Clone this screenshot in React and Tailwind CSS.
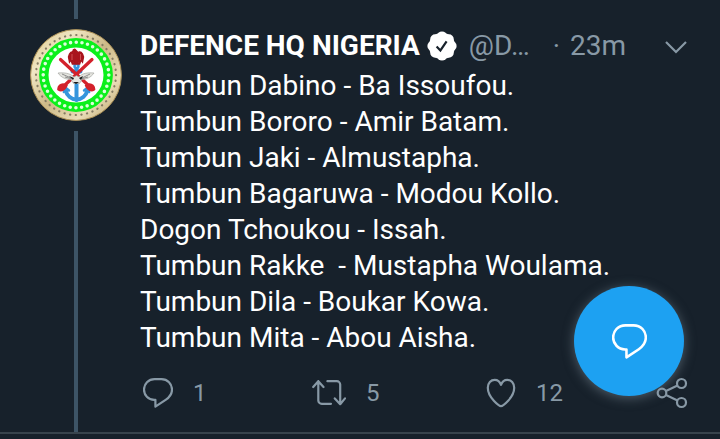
import { useState } from 'react'

const TWEET = {
  name: 'DEFENCE HQ NIGERIA',
  handle: '@D…',
  age: '23m',
  lines: [
    'Tumbun Dabino - Ba Issoufou.',
    'Tumbun Bororo - Amir Batam.',
    'Tumbun Jaki - Almustapha.',
    'Tumbun Bagaruwa - Modou Kollo.',
    'Dogon Tchoukou - Issah.',
    'Tumbun Rakke  - Mustapha Woulama.',
    'Tumbun Dila - Boukar Kowa.',
    'Tumbun Mita - Abou Aisha.',
  ],
  replies: 1,
  retweets: 5,
  likes: 12,
}

// Shared by the reply action and the floating compose button
function BubbleIcon({ className, strokeWidth = 2.2 }) {
  return (
    <svg viewBox="0 0 30 30" className={className} fill="none" stroke="currentColor" strokeWidth={strokeWidth} strokeLinejoin="round" aria-hidden="true">
      <path d="M11.5 1.2h7C24.6 1.2 29 5.8 29 11.6c0 4-2.2 7.4-6 10L12.4 28.6v-6.8h-1.2C5.2 21.6 1 17 1 11.6 1 5.8 5.4 1.2 11.5 1.2z" />
    </svg>
  )
}

function RetweetIcon() {
  return (
    <svg viewBox="0 0 34 30" className="h-[30px] w-[34px]" fill="none" stroke="currentColor" strokeWidth="2.2" strokeLinecap="round" strokeLinejoin="round" aria-hidden="true">
      <path d="M1.2 9 6.3 3.2l5.2 5.8M6.3 3.2v19.2a3.4 3.4 0 0 0 3.4 3.4H19M15.400 3.200h9.400a3.400 3.400 0 0 1 3.400 3.400V26M22.800 20.400l5.400 5.800 4.800-5.800" />
    </svg>
  )
}

function HeartIcon() {
  return (
    <svg viewBox="0 0 30 30" className="size-[30px]" fill="none" stroke="currentColor" strokeWidth="2.2" strokeLinejoin="round" aria-hidden="true">
      <path d="M15 28.2c-1.500 0-13.200-8.400-13.200-18.400 0-5 3.100-8 6.900-8 3 0 5.200 1.900 6.300 5 1.100-3.100 3.300-5 6.300-5 3.800 0 6.900 3 6.900 8 0 10-11.700 18.400-13.200 18.400z" />
    </svg>
  )
}

function ShareIcon() {
  return (
    <svg viewBox="0 0 32 32" className="size-8" fill="none" stroke="currentColor" strokeWidth="2.2" aria-hidden="true">
      <circle cx="6" cy="16" r="4.3" />
      <circle cx="25.5" cy="6.5" r="4.5" />
      <circle cx="25.5" cy="25.5" r="4.5" />
      <path d="m10 14 11.500-5.500M10 18l11.500 5.500" />
    </svg>
  )
}

const LOBES = [0, 45, 90, 135, 180, 225, 270, 315]

function VerifiedBadge() {
  return (
    <svg viewBox="0 0 30 30" className="size-[30px] shrink-0" role="img" aria-label="Verified account">
      <g fill="#fff">
        <circle cx="15" cy="15" r="13.2" />
        {LOBES.map((deg) => (
          <circle key={deg} cx="15" cy="5.4" r="5" transform={`rotate(${deg} 15 15)`} />
        ))}
      </g>
      <path d="m9.6 15.400 3.800 4 6.200-9" fill="none" stroke="#17212b" strokeWidth="2.2" />
    </svg>
  )
}

// Round crest: gold rim, beaded green band, eagle over crossed swords and anchor
function Crest() {
  return (
    <svg viewBox="0 0 92 92" className="size-[92px] shrink-0" role="img" aria-label="Defence HQ Nigeria">
      <defs>
        <linearGradient id="rim" x1="0" y1="0" x2="1" y2="1">
          <stop offset="0" stopColor="#d8c07c" />
          <stop offset=".25" stopColor="#f0e6c4" />
          <stop offset=".5" stopColor="#cdb987" />
          <stop offset=".75" stopColor="#e9ddb8" />
          <stop offset="1" stopColor="#b39757" />
        </linearGradient>
      </defs>
      <circle cx="46" cy="46" r="45.4" fill="url(#rim)" stroke="#a98e54" />
      <circle cx="46" cy="46" r="40" fill="none" stroke="#857b62" strokeWidth="2.2" strokeLinecap="round" strokeDasharray="0.2 5.51" />
      <circle cx="46" cy="46" r="32.2" fill="#fff" stroke="#0bf01b" strokeWidth="9.4" />
      <circle cx="46" cy="46" r="32.8" fill="none" stroke="#ddffdc" strokeWidth="3.6" strokeLinecap="round" strokeDasharray="0 5.725" />
      <g fill="none" stroke="#3595dc" strokeLinecap="round">
        <circle cx="46.5" cy="37" r="2" strokeWidth="2.4" />
        <path d="M46.5 40v31M42.5 42.5h8" strokeWidth="4" />
        <path d="M35.5 61c1.500 6 6 9.500 11 9.500s9.500-3.500 11-9.500" strokeWidth="4" />
        <path d="m33.8 63 1.600-4.500 3.600 3M59.200 63l-1.600-4.500-3.600 3" strokeWidth="2.4" />
      </g>
      <g fill="none" stroke="#d3212b" strokeLinecap="round">
        <path d="M30.5 30.500 58 56M62 30.500 35 56" strokeWidth="3.2" />
        <path d="M33 56c-2 0-4 1.500-4 4 2 1.500 5 .5 6.500-3zM59.500 56c2 0 4 1.500 4 4-2 1.500-5 .5-6.500-3z" fill="#df2527" strokeWidth="3.6" />
      </g>
      <path d="M46 21.500c-1-2-3-1.200-3 .5l1 1.500c-2-1.500-4.500-.5-5.500 4.500l1 5 1.500-2 1 3 1.500-3 .5 3-2 1h8l-2-1 .5-3 1.500 3 1-3 1.500 2 1-5c-1-5-3.500-6-5.500-4.500z" fill="#a9151d" stroke="#a9151d" strokeWidth="1.4" />
      <path d="M42 25v6M50.500 25v6" stroke="#df6a6a" strokeWidth=".7" />
      <path d="M28 44c6-.5 12 0 16 4l2.500-1.500L49 48c3-4 9-4.500 15-4-3 4.500-8 6.500-12 6.500l-2.500 4h-6l-2.500-4c-5 0-10-2-13-6.500z" fill="#e4e4df" stroke="#9a9c97" strokeWidth=".6" />
      <path d="m32 45 9 4M35 48l7 2M60 45l-8 4M58 48l-7 2" fill="none" stroke="#777" strokeWidth=".8" />
      <path d="m39 47 5 2-1 2zM49 49l4-2-2 4zM43 53h6l-3 2z" fill="#17191b" />
    </svg>
  )
}

function Action({ label, count, children, ...rest }) {
  return (
    <button type="button" aria-label={label} className="flex flex-1 items-center gap-5 text-left" {...rest}>
      {children}
      <span>{count}</span>
    </button>
  )
}

export default function App() {
  const [liked, setLiked] = useState(false)

  return (
    <main className="min-h-screen bg-[#17212b] font-[Roboto,sans-serif] text-[28px] leading-9 text-white">
      <article className="flex gap-[18px] border-b-2 border-[#38444d] pr-8 pl-[30px]">
        {/* Thread line runs above and below the avatar */}
        <div className="flex shrink-0 flex-col items-center gap-[10px]">
          <div className="h-[19px] w-1 bg-[#3d5466]" />
          <Crest />
          <div className="w-1 flex-1 bg-[#3d5466]" />
        </div>

        <div className="min-w-0 flex-1 pt-7 pb-[21px]">
          <header className="flex items-center whitespace-nowrap text-[#8899a6]">
            <h1 className="font-bold text-white">{TWEET.name}</h1>
            <span className="mr-3 ml-[7px] flex">
              <VerifiedBadge />
            </span>
            <span>{TWEET.handle}</span>
            <span className="mr-[10px] ml-[23px]">·</span>
            <time>{TWEET.age}</time>
            <button type="button" aria-label="More options" className="ml-auto">
              <svg viewBox="0 0 24 24" className="size-6" fill="none" stroke="currentColor" strokeWidth="2.2" aria-hidden="true">
                <path d="m2 8 10 10L22 8" />
              </svg>
            </button>
          </header>

          <p className="mt-1 whitespace-pre-wrap">{TWEET.lines.join('\n')}</p>

          <footer className="mt-[19px] flex items-center text-2xl leading-9 text-[#8899a6]">
            <Action label="Reply" count={TWEET.replies}>
              <span className="ml-[3px]">
                <BubbleIcon className="size-[30px]" />
              </span>
            </Action>
            <Action label="Retweet" count={TWEET.retweets}>
              <RetweetIcon />
            </Action>
            <Action
              label="Like"
              aria-pressed={liked}
              onClick={() => setLiked((v) => !v)}
              count={liked ? TWEET.likes + 1 : TWEET.likes}
            >
              <span className="ml-0.5">
                <HeartIcon />
              </span>
            </Action>
            <button type="button" aria-label="Share">
              <ShareIcon />
            </button>
          </footer>
        </div>
      </article>

      <button
        type="button"
        aria-label="Compose reply"
        className="fixed right-9 bottom-[43px] flex size-[110px] items-center justify-center rounded-full bg-[#1da1f2] shadow-[0_2px_12px_rgba(136,153,166,0.5)]"
      >
        <BubbleIcon className="size-[35px]" />
      </button>
    </main>
  )
}
